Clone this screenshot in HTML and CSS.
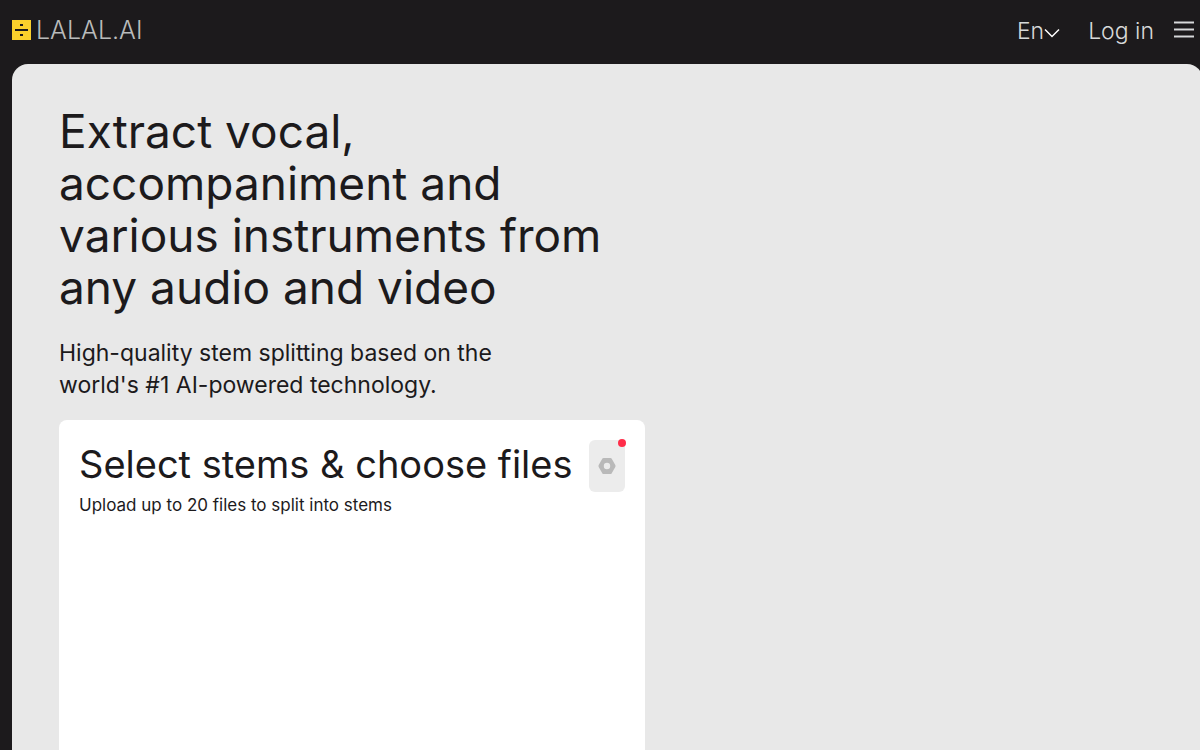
FILE: index.html
```
<!DOCTYPE html>
<html lang="en">
<head>
<meta charset="utf-8">
<meta name="viewport" content="width=device-width, initial-scale=1">
<title>LALAL.AI</title>
<link rel="stylesheet" href="styles.css">
</head>
<body>
<header class="header">
  <a class="logo" href="#">
    <svg class="logo-mark" width="19" height="20" viewBox="0 0 19 20" shape-rendering="crispEdges" aria-hidden="true"><path fill="#fad02c" d="M0 0h19v20H0z"/><path fill="#1c1a1c" d="M3 9h13v2H3zM8 4h3v2H8zM8 14h3v2H8z"/></svg>
    <span>LALAL.AI</span>
  </a>
  <nav class="nav">
    <button class="lang" type="button"><span>En</span><svg width="16" height="10" viewBox="0 0 16 10" fill="none" stroke="#fff" stroke-width="1.5" aria-hidden="true"><path d="M1 1.5l7 7 7-7"/></svg></button>
    <a class="login" href="#">Log in</a>
    <button class="menu" type="button" aria-label="Menu"><svg width="20" height="18" viewBox="0 0 20 18" aria-hidden="true"><path fill="#77767a" d="M0 0h20v3H0zM0 7h20v3H0zM0 14h20v3H0z"/><path fill="#d7d9d9" d="M0 1h20v1H0zM0 8h20v1H0zM0 15h20v1H0z"/></svg></button>
  </nav>
</header>
<main class="panel">
  <section class="hero">
    <h1>Extract vocal, accompaniment and various instruments from any audio and video</h1>
    <p class="lead">High-quality stem splitting based on the world's #1 AI-powered technology.</p>
    <div class="card">
      <div class="card-text">
        <h2>Select stems &amp; choose files</h2>
        <p>Upload up to 20 files to split into stems</p>
      </div>
      <button class="settings" type="button" aria-label="Settings">
        <svg width="18" height="16" viewBox="0 0 18 16" aria-hidden="true"><path fill="#b9b9b9" fill-rule="evenodd" d="M5.5 0h7q.7 0 1.100.6l3.700 6.500q.5.900 0 1.800l-3.700 6.500q-.4.600-1.100.600h-7q-.7 0-1.100-.6L.7 8.900q-.5-.9 0-1.800L4.400.6Q4.800 0 5.500 0zM9 4.800a3.200 3.200 0 1 0 0 6.400 3.200 3.200 0 0 0 0-6.400z"/></svg>
        <span class="dot"></span>
      </button>
    </div>
  </section>
</main>
</body>
</html>
```
FILE: styles.css
```
* { box-sizing: border-box; }
body {
  margin: 0;
  min-height: 100vh;
  display: flex;
  flex-direction: column;
  overflow: hidden;
  background: #1c1a1c;
  color: #1c1a1c;
  font-family: Inter, "Liberation Sans", sans-serif;
}
h1, h2, p { margin: 0; font-weight: 400; }
button { border: 0; padding: 0; background: none; color: inherit; font: inherit; }
a { color: inherit; text-decoration: none; }
.header {
  display: flex;
  align-items: center;
  justify-content: space-between;
  height: 64px;
  padding: 0 6px 4px 12px;
  color: #d7d9d9;
  font-size: 23px;
  font-weight: 300;
}
.logo { display: flex; align-items: center; gap: 5px; color: #b9bbbb; font-size: 25px; font-weight: 300; }
.nav { display: flex; align-items: center; }
.lang { display: flex; align-items: center; margin-right: 28px; }
.lang span, .login { padding-top: 2px; }
.lang svg { margin-top: 6px; }
.login { margin-right: 20px; }
.menu { display: flex; }
.panel {
  flex: 1;
  margin: 0 -3px 0 12px;
  padding: 41px 48px 0 47px;
  border-radius: 16px 16px 0 0;
  background: #e8e8e8;
}
.hero { max-width: 586px; min-height: 645px; display: flex; flex-direction: column; }
h1 { font-size: 46px; line-height: 52px; }
.lead { max-width: 480px; margin: 24px 0 19px; font-size: 23px; line-height: 32px; }
.card {
  flex: 1;
  display: flex;
  align-items: flex-start;
  justify-content: space-between;
  padding: 20px;
  border-radius: 8px 8px 0 0;
  background: #fff;
}
h2 { font-size: 38px; line-height: 48px; white-space: nowrap; }
.card p { margin-top: 5px; font-size: 17px; line-height: 24px; }
.settings {
  position: relative;
  flex: none;
  display: flex;
  align-items: center;
  justify-content: center;
  width: 36px;
  height: 52px;
  border-radius: 6px;
  background: #ececec;
}
.dot {
  position: absolute;
  top: -1px;
  right: -1px;
  width: 8px;
  height: 8px;
  border-radius: 50%;
  background: #ff2d49;
}
```
